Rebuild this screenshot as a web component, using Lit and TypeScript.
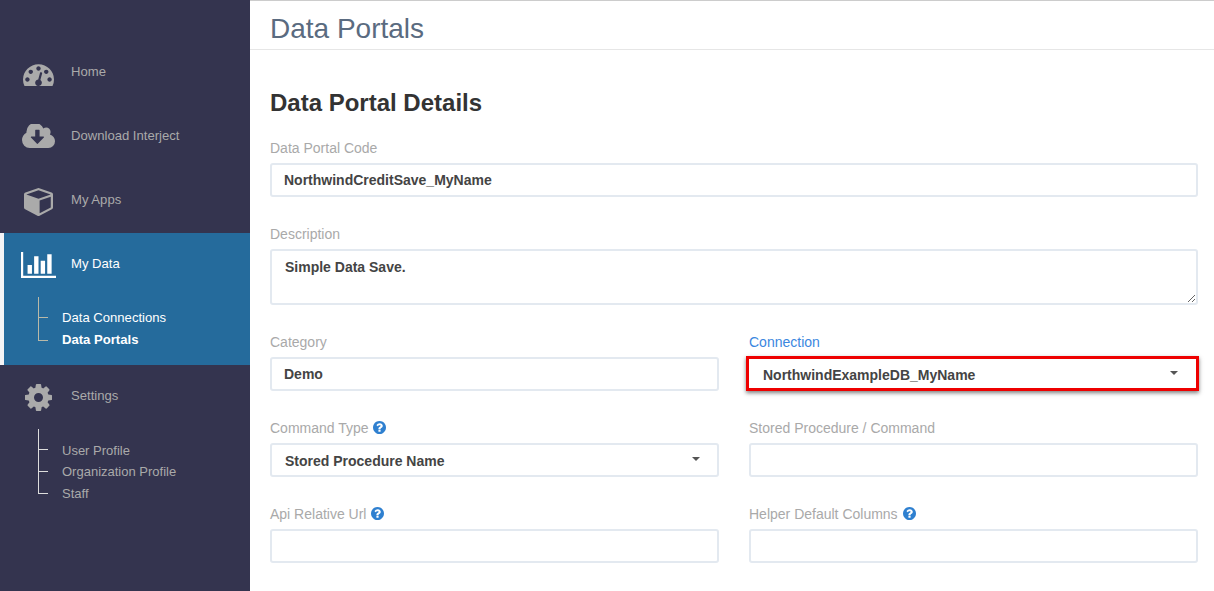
import { LitElement, html, css, svg } from "lit";
import { customElement } from "lit/decorators.js";

const ICONS = {
  gauge: { vb: "0 128 1792 1408", w: 31, h: 24, d: "M384 1152q0-53-37.5-90.5t-90.5-37.5-90.5 37.5-37.5 90.5 37.5 90.5 90.5 37.5 90.5-37.5 37.5-90.5zm192-448q0-53-37.5-90.5t-90.5-37.5-90.5 37.5-37.5 90.5 37.5 90.5 90.5 37.5 90.5-37.5 37.5-90.5zm428 481l101-382q6-26-7.5-48.5t-38.5-29.5-48 6.5-30 39.5l-101 382q-60 5-107 43.5t-63 98.5q-20 77 20 146t117 89 146-20 89-117q16-60-6-117t-72-91zm660-33q0-53-37.5-90.5t-90.5-37.5-90.5 37.5-37.5 90.5 37.5 90.5 90.5 37.5 90.5-37.5 37.5-90.5zm-640-640q0-53-37.5-90.5t-90.5-37.5-90.5 37.5-37.5 90.5 37.5 90.5 90.5 37.5 90.5-37.5 37.5-90.5zm448 192q0-53-37.5-90.5t-90.5-37.5-90.5 37.5-37.5 90.5 37.5 90.5 90.5 37.5 90.5-37.5 37.5-90.5zm320 448q0 261-141 483-19 29-54 29h-1402q-35 0-54-29-141-221-141-483 0-182 71-348t191-286 286-191 348-71 348 71 286 191 191 286 71 348z" },
  cloud: { vb: "0 192 1920 1344", w: 33, h: 24, d: "M1280 928q0-14-9-23t-23-9h-224v-352q0-13-9.5-22.5t-22.5-9.5h-192q-13 0-22.5 9.5t-9.5 22.5v352h-224q-13 0-22.5 9.5t-9.5 22.5q0 14 9 23l352 352q9 9 23 9t23-9l351-351q10-12 10-24zm640 224q0 159-112.5 271.5t-271.5 112.5h-1088q-185 0-316.5-131.5t-131.5-316.5q0-130 70-240t188-165q-2-30-2-43 0-212 150-362t362-150q156 0 285.5 87t188.5 231q71-62 166-62 106 0 181 75t75 181q0 76-41 138 130 31 213.5 135.5t83.5 238.5z" },
  cube: { vb: "0 128 1664 1664", w: 29, h: 28, d: "M896 1629l640-349v-636l-640 233v752zm-64-865l698-254-698-254-698 254zm832-252v768q0 35-18 65t-49 47l-704 384q-28 16-61 16t-61-16l-704-384q-31-17-49-47t-18-65v-768q0-40 23-73t61-47l704-256q22-8 44-8t44 8l704 256q38 14 61 47t23 73z" },
  bars: { vb: "0 128 2048 1536", w: 35, h: 26, d: "M640 896v512h-256v-512h256zm384-512v1024h-256v-1024h256zm1024 1152v128h-2048v-1536h128v1408h1920zm-640-896v768h-256v-768h256zm384-384v1152h-256v-1152h256z" },
  cog: { vb: "128 128 1536 1536", w: 27, h: 27, d: "M1152 896q0-106-75-181t-181-75-181 75-75 181 75 181 181 75 181-75 75-181zm512-109v222q0 12-8 23t-20 13l-185 28q-19 54-39 91 35 50 107 138 10 12 10 25t-9 23q-27 37-99 108t-94 71q-12 0-26-9l-138-108q-44 23-91 38-16 136-29 186-7 28-36 28h-222q-14 0-24.5-8.5t-11.5-21.5l-28-184q-49-16-90-37l-141 107q-10 9-25 9-14 0-25-11-126-114-165-168-7-10-7-23 0-12 8-23 15-21 51-66.5t54-70.5q-27-50-41-99l-183-27q-13-2-21-12.5t-8-23.5v-222q0-12 8-23t19-13l186-28q14-46 39-92-40-57-107-138-10-12-10-24 0-10 9-23 26-36 98.5-107.5t94.5-71.5q13 0 26 10l138 107q44-23 91-38 16-136 29-186 7-28 36-28h222q14 0 24.5 8.5t11.5 21.5l28 184q49 16 90 37l142-107q9-9 24-9 13 0 25 10 129 119 165 170 7 8 7 22 0 12-8 23-15 21-51 66.5t-54 70.5q26 50 41 98l183 28q13 2 22 12.5t9 23.5z" },
  help: { vb: "128 128 1536 1536", w: 13, h: 13, d: "M1024 1376v-192q0-14-9-23t-23-9h-192q-14 0-23 9t-9 23v192q0 14 9 23t23 9h192q14 0 23-9t9-23zm256-672q0-88-55.5-163t-138.5-116-170-41q-243 0-371 213-15 24 8 42l132 100q7 6 19 6 16 0 25-12 53-68 86-92 34-24 86-24 48 0 85.5 26t37.5 59q0 38-20 61t-68 45q-63 28-115.5 86.5t-52.5 125.5v36q0 14 9 23t23 9h192q14 0 23-9t9-23q0-19 21.5-49.5t54.5-49.5q32-18 49-28.5t46-35 44.5-48 28-60.5 12.5-81zm384 192q0 209-103 385.5t-279.5 279.5-385.5 103-385.5-103-279.5-279.5-103-385.5 103-385.5 279.5-279.5 385.5-103 385.5 103 279.5 279.5 103 385.5z" },
};

type IconName = keyof typeof ICONS;

function icon(name: IconName) {
  const i = ICONS[name];
  return html`<svg class="ico" width=${i.w} height=${i.h} viewBox=${i.vb} fill="currentColor" preserveAspectRatio="none">${svg`<path d=${i.d}></path>`}</svg>`;
}

@customElement("app-root")
export class AppRoot extends LitElement {
  static styles = css`
    :host {
      display: block;
      width: 1214px;
      height: 591px;
      overflow: hidden;
      font-family: "Liberation Sans", Arial, sans-serif;
      background: #fff;
    }
    .page { display: flex; height: 591px; }
    .side {
      width: 250px;
      flex: none;
      background: #34344f;
      padding-top: 41px;
      box-sizing: border-box;
      color: #aaaaaa;
    }
    .item {
      display: flex;
      height: 64px;
      box-sizing: border-box;
      padding-top: 22px;
      font-size: 13.1px;
      line-height: 18px;
    }
    .slot {
      width: 71px;
      box-sizing: border-box;
      padding-left: 6px;
      flex: none;
      display: flex;
      justify-content: center;
      align-items: flex-start;
      margin-top: -3px;
    }
    .slot .ico { flex: none; }
    .gauge-slot { margin-top: -1px; }
    .group-active {
      background: #256b9c;
      border-left: 4px solid #f4f4f6;
      color: #fff;
      height: 132px;
      box-sizing: border-box;
    }
    .group-active .item { margin-left: -4px; }
    .tree {
      list-style: none;
      margin: 0;
      padding: 0;
      margin-left: 38px;
      font-size: 13px;
      --line: #dddddd;
    }
    .group-active .tree { margin-left: 34px; --line: #b9b9a8; font-size: 13.1px; }
    .tree li {
      height: 21.5px;
      line-height: 21.5px;
      padding-left: 24px;
      background:
        linear-gradient(var(--line), var(--line)) 0 0 / 1px 100% no-repeat,
        linear-gradient(var(--line), var(--line)) 0 calc(100% - 11px) / 10px 1px no-repeat;
    }
    .tree li:first-child { height: 32px; padding-top: 10.5px; box-sizing: border-box; }
    .group-active .tree li:first-child { padding-top: 9.5px; }
    .tree li:last-child {
      background:
        linear-gradient(var(--line), var(--line)) 0 0 / 1px calc(100% - 10px) no-repeat,
        linear-gradient(var(--line), var(--line)) 0 calc(100% - 10px) / 10px 1px no-repeat;
    }
    .strong { font-weight: 700; }

    .main { flex: 1; min-width: 0; }
    .head {
      border-top: 1px solid #cccccc;
      border-bottom: 1px solid #e6e6e6;
      box-sizing: content-box;
      height: 48px;
      padding-left: 20px;
      font-size: 28px;
      line-height: 55px;
      color: #5a6b80;
    }
    .content { padding: 0 16px 0 20px; }
    h2 {
      margin: 0;
      padding-top: 38px;
      height: 88px;
      box-sizing: border-box;
      font-size: 24px;
      line-height: 30px;
      font-weight: 700;
      color: #333333;
    }
    .grid {
      display: grid;
      grid-template-columns: 449px 449px;
      column-gap: 30px;
      row-gap: 27px;
    }
    .full { grid-column: 1 / 3; }
    label {
      display: block;
      height: 20px;
      line-height: 20px;
      margin-bottom: 5px;
      font-size: 14px;
      color: #a9a9a9;
    }
    label .ico { color: #2f80d0; margin-left: 1px; vertical-align: -1px; }
    label.focus { color: #3b87e0; }
    .ctl {
      display: block;
      width: 100%;
      height: 34px;
      box-sizing: border-box;
      border: 2px solid #e3e9f0;
      border-radius: 3px;
      padding: 0 12px;
      margin: 0;
      background: #fff;
      font: 700 14px "Liberation Sans", Arial, sans-serif;
      color: #444444;
      outline: none;
    }
    textarea.ctl { height: 56px; padding-top: 7px; padding-left: 13px; line-height: 18px; resize: vertical; }
    .select {
      display: flex;
      align-items: center;
      justify-content: space-between;
      padding-left: 13px;
      padding-right: 17px;
      padding-top: 2px;
    }
    .caret {
      width: 0;
      height: 0;
      border-left: 4px solid transparent;
      border-right: 4px solid transparent;
      border-top: 4px solid #555;
      margin-top: -5px;
    }
    .hot {
      border: 3px solid #ee0000;
      border-radius: 0;
      height: 35px;
      width: 453px;
      margin: -1px 0 0 -3px;
      padding-left: 14px;
      padding-right: 18px;
      padding-top: 3px;
      box-shadow: 0 2px 4px rgba(0, 0, 0, .5);
    }
  `;

  private navItem(ic: IconName, text: string) {
    return html`<div class="item"><span class="slot ${ic}-slot">${icon(ic)}</span><span>${text}</span></div>`;
  }

  private field(labelText: string, control: unknown, help = false, cls = "") {
    return html`<div class=${cls}>
      <label class=${labelText === "Connection" ? "focus" : ""}>${labelText}${help ? html` ${icon("help")}` : ""}</label>
      ${control}
    </div>`;
  }

  private input(value = "") {
    return html`<input class="ctl" type="text" .value=${value} />`;
  }

  private select(value: string, hot = false) {
    return html`<div class="ctl select ${hot ? "hot" : ""}"><span>${value}</span><span class="caret"></span></div>`;
  }

  render() {
    return html`
      <div class="page">
        <nav class="side">
          ${this.navItem("gauge", "Home")}
          ${this.navItem("cloud", "Download Interject")}
          ${this.navItem("cube", "My Apps")}
          <div class="group-active">
            ${this.navItem("bars", "My Data")}
            <ul class="tree">
              <li>Data Connections</li>
              <li class="strong">Data Portals</li>
            </ul>
          </div>
          ${this.navItem("cog", "Settings")}
          <ul class="tree">
            <li>User Profile</li>
            <li>Organization Profile</li>
            <li>Staff</li>
          </ul>
        </nav>
        <main class="main">
          <header class="head">Data Portals</header>
          <section class="content">
            <h2>Data Portal Details</h2>
            <div class="grid">
              ${this.field("Data Portal Code", this.input("NorthwindCreditSave_MyName"), false, "full")}
              ${this.field("Description", html`<textarea class="ctl" .value=${"Simple Data Save."}></textarea>`, false, "full")}
              ${this.field("Category", this.input("Demo"))}
              ${this.field("Connection", this.select("NorthwindExampleDB_MyName", true))}
              ${this.field("Command Type", this.select("Stored Procedure Name"), true)}
              ${this.field("Stored Procedure / Command", this.input())}
              ${this.field("Api Relative Url", this.input(), true)}
              ${this.field("Helper Default Columns", this.input(), true)}
            </div>
          </section>
        </main>
      </div>
    `;
  }
}
